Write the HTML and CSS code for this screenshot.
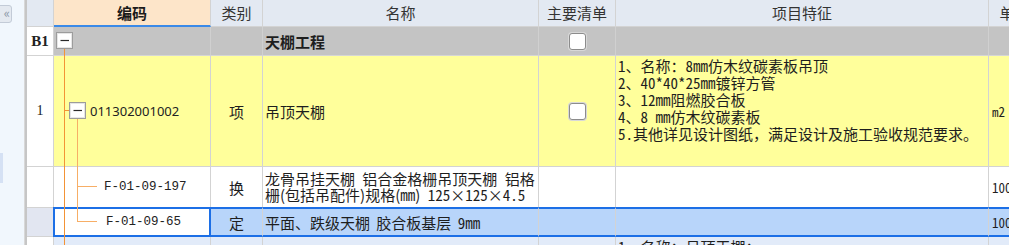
FILE: index.html
```html
<!DOCTYPE html>
<html lang="zh-CN">
<head>
<meta charset="utf-8">
<title>清单</title>
<link rel="stylesheet" href="styles.css">
</head>
<body>
<div class="app">
  <aside class="side">
    <div class="collapse">«</div>
    <div class="side-tab"></div>
  </aside>
  <div class="splitter"></div>
  <div class="grid-wrap">
    <div class="grid">
      <div class="c h"></div>
      <div class="c h code-h">编码</div>
      <div class="c h">类别</div>
      <div class="c h">名称</div>
      <div class="c h">主要清单</div>
      <div class="c h">项目特征</div>
      <div class="c h">单位</div>

      <div class="c n b1n">B1</div>
      <div class="c gray"></div>
      <div class="c gray"></div>
      <div class="c gray name bold">天棚工程</div>
      <div class="c gray ctr"><span class="chk"></span></div>
      <div class="c gray"></div>
      <div class="c gray"></div>

      <div class="c n">1</div>
      <div class="c yellow code lvl2 sans">011302001002</div>
      <div class="c yellow ctr">项</div>
      <div class="c yellow name">吊顶天棚</div>
      <div class="c yellow ctr"><span class="chk"></span></div>
      <div class="c yellow feat song">1、名称：8mm仿木纹碳素板吊顶<br>2、40*40*25mm镀锌方管<br>3、12mm阻燃胶合板<br>4、8 mm仿木纹碳素板<br>5.其他详见设计图纸，满足设计及施工验收规范要求。</div>
      <div class="c yellow unit song">m2</div>

      <div class="c n"></div>
      <div class="c code lvl3 mono">F-01-09-197</div>
      <div class="c ctr">换</div>
      <div class="c name wrap">龙骨吊挂天棚 铝合金格栅吊顶天棚 铝格<br>栅(包括吊配件)规格(<span class="song">mm</span>) <span class="song">125×125×4.5</span></div>
      <div class="c"></div>
      <div class="c"></div>
      <div class="c unit song">100</div>

      <div class="c n seln"></div>
      <div class="c code lvl3 mono selcode">F-01-09-65</div>
      <div class="c sel ctr">定</div>
      <div class="c sel name spaced"><span>平面、跌级天棚 胶合板基层 <span class="song">9mm</span></span></div>
      <div class="c sel"></div>
      <div class="c sel"></div>
      <div class="c sel unit song">100</div>

      <div class="c n"></div>
      <div class="c hov"></div>
      <div class="c hov"></div>
      <div class="c hov"></div>
      <div class="c hov"></div>
      <div class="c hov feat song">1、名称：吊顶天棚；</div>
      <div class="c hov"></div>
    </div>
    <svg class="tree" width="200" height="245" viewBox="0 0 200 245">
      <line x1="37.5" y1="48" x2="37.5" y2="245" stroke="#f39336" stroke-width="1"/>
      <line x1="37" y1="110.5" x2="42" y2="110.5" stroke="#f39336" stroke-width="1"/>
      <line x1="50.5" y1="118" x2="50.5" y2="222" stroke="#f7ae66" stroke-width="1"/>
      <line x1="50" y1="186.5" x2="70" y2="186.5" stroke="#f7ae66" stroke-width="1"/>
      <line x1="50" y1="221.5" x2="70" y2="221.5" stroke="#f7ae66" stroke-width="1"/>
      <rect x="29.5" y="32.5" width="16" height="16" fill="#ffffff" stroke="#9c9c9c"/>
      <rect x="30.5" y="33.5" width="14" height="14" fill="none" stroke="#e6e6e6"/>
      <line x1="33.5" y1="40.5" x2="42" y2="40.5" stroke="#2a2a2a" stroke-width="1.2"/>
      <rect x="42.5" y="102.5" width="16" height="16" fill="#ffffff" stroke="#9c9c9c"/>
      <rect x="43.5" y="103.5" width="14" height="14" fill="none" stroke="#e6e6e6"/>
      <line x1="46.5" y1="110.5" x2="55" y2="110.5" stroke="#2a2a2a" stroke-width="1.2"/>
    </svg>
  </div>
</div>
</body>
</html>
```

FILE: styles.css
```css
html, body {
  margin: 0;
  padding: 0;
  background: #ffffff;
}

body {
  width: 1009px;
  height: 245px;
  overflow: hidden;
  font-family: "Noto Sans CJK SC", "Noto Sans", sans-serif;
  font-size: 15px;
  color: #1e1e1e;
}

.app {
  display: flex;
  height: 245px;
}

.side {
  width: 24px;
  flex: none;
  background: #f1f7fd;
  overflow: hidden;
  display: flex;
  flex-direction: column;
}

.collapse {
  margin-top: 5px;
  margin-left: -11px;
  width: 20px;
  height: 16px;
  border: 1px solid #c3cbd7;
  border-radius: 3px;
  background: #e4e9f0;
  color: #8d98a8;
  font-size: 13px;
  line-height: 14px;
  text-align: right;
  padding-right: 1px;
  box-sizing: content-box;
}

.side-tab {
  margin-top: 130px;
  width: 3px;
  height: 30px;
  background: #d5e1f4;
}

.splitter {
  width: 3px;
  flex: none;
  background: #c6c6c6;
  border-left: 1px solid #d8d8d8;
  box-sizing: border-box;
}

.grid-wrap {
  position: relative;
  flex: 1;
  overflow: hidden;
}

.grid {
  display: grid;
  grid-template-columns: 27px 157px 52px 276px 77px 373px 52px;
  grid-template-rows: 27px 29px 111px 41px 29px 30px;
}

.c {
  box-sizing: border-box;
  border-right: 1px solid #d3d3d3;
  border-bottom: 1px solid #d3d3d3;
  display: flex;
  align-items: center;
  overflow: hidden;
  white-space: nowrap;
  min-width: 0;
}

.h {
  background: #e3e9f2;
  justify-content: center;
  color: #333333;
  padding-bottom: 1px;
}

.code-h {
  background: #fde5c9;
  border-bottom: 2px solid #3a8ae8;
  font-weight: bold;
  color: #1a1a1a;
  padding-bottom: 0;
}

.n {
  background: #ffffff;
  justify-content: center;
  font-family: "Liberation Serif", serif;
  font-size: 14px;
  color: #222;
}

.b1n {
  font-weight: bold;
  font-size: 15px;
}

.gray {
  background: #c4c4c4;
  border-right-color: #d0d0d0;
  border-bottom-color: #d6d6d6;
}

.yellow {
  background: #ffff9b;
}

.ctr {
  justify-content: center;
}

.name {
  padding-left: 2px;
}

.bold {
  font-weight: bold;
}

.wrap {
  white-space: nowrap;
  line-height: 16px;
  display: block;
  padding-top: 4px;
  word-spacing: 4px;
}

.spaced {
  word-spacing: 3px;
}

.code {
  padding-left: 36px;
}

.lvl2 {
  padding-left: 36px;
}

.lvl3 {
  padding-left: 50px;
}

.sans {
  font-family: "Noto Sans", sans-serif;
  font-size: 13px;
  color: #222;
}

.mono {
  font-family: "Liberation Mono", monospace;
  font-size: 12.5px;
  color: #222;
}

.song {
  font-family: "Noto Sans Mono CJK SC", "Noto Sans CJK SC", monospace;
}

.feat {
  display: block;
  padding: 1px 0 0 2px;
  line-height: 17px;
  font-size: 15px;
}

.unit {
  padding-left: 3px;
  font-size: 13px;
}

.seln {
  background: #e2e6f1;
}

.sel {
  background: #b8d5fa;
  border-top: 2px solid #1c6fe6;
  border-bottom: 2px solid #1c6fe6;
  margin-top: -1px;
}

.selcode {
  background: #ffffff;
  border: 2px solid #1c6fe6;
  margin-left: -1px;
  margin-top: -1px;
  padding-left: 51px;
}

.hov {
  background: #e2ebf9;
}

.hov.feat {
  padding-top: 1px;
}

.chk {
  display: block;
  width: 15px;
  height: 15px;
  border: 1px solid #8c8c8c;
  border-radius: 3px;
  background: #ffffff;
  box-shadow: 0 0 0 1px #d8d8d8;
}

.tree {
  position: absolute;
  left: 0;
  top: 0;
  pointer-events: none;
}
```
